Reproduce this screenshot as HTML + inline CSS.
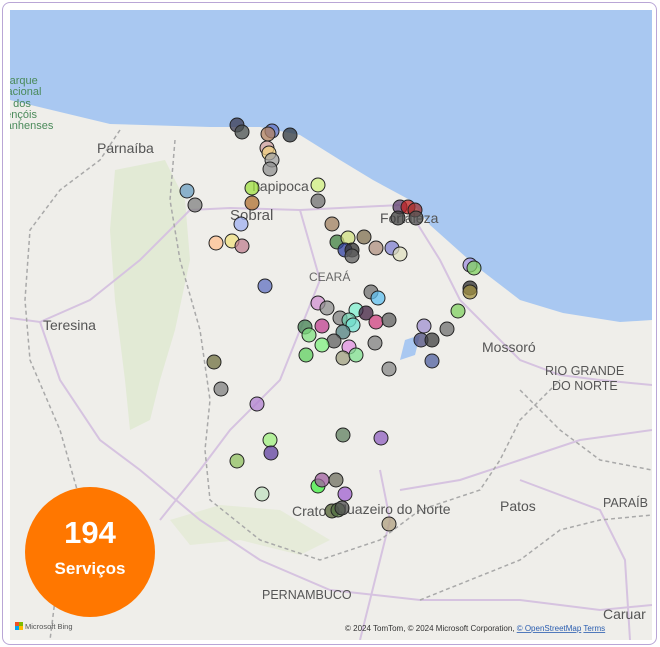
<!DOCTYPE html>
<html><head><meta charset="utf-8"><style>
html,body{margin:0;padding:0;background:#fff;width:660px;height:647px;overflow:hidden}
.frame{position:absolute;left:2px;top:2px;width:655px;height:643px;border:1px solid #b9a6d6;border-radius:8px;box-sizing:border-box}
svg{position:absolute;left:0;top:0}
text{font-family:"Liberation Sans","DejaVu Sans",sans-serif}
</style></head><body>
<div class="frame"></div>
<svg width="660" height="647" viewBox="0 0 660 647">
<defs><clipPath id="c"><rect x="10" y="10" width="642" height="630"/></clipPath></defs>
<g clip-path="url(#c)">
<rect x="10" y="10" width="642" height="630" fill="#efeeea"/>
<path d="M10,10 H652 V320 L620,322 L563,313 L520,300 L477,267 L430,225 L410,200 L373,180 L340,160 L300,135 L260,127 L210,127 L110,124 L60,112 L10,100 Z" fill="#a9c8f1"/>
<path d="M115,170 L165,160 L185,200 L190,260 L175,330 L160,380 L150,420 L130,430 L125,380 L115,300 L110,230 Z" fill="#dfe8cf" opacity="0.8"/>
<path d="M170,520 L220,505 L280,510 L330,540 L300,555 L240,540 L190,545 Z" fill="#e2e9d2" opacity="0.7"/>
<g fill="none" stroke="#d6c3e0" stroke-width="2">
<path d="M10,318 L40,322 L90,300 L140,260 L190,210 L230,208 L300,210 L400,205"/>
<path d="M40,322 L60,380 L100,440 L140,470 L200,520 L260,560 L330,590 L420,600 L520,600 L600,610 L652,605"/>
<path d="M415,220 L440,260 L460,300 L490,330 L520,360 L560,375 L600,380 L652,385"/>
<path d="M300,210 L320,280 L280,380 L230,430 L200,470 L160,520"/>
<path d="M380,470 L390,520 L370,600 L360,640"/>
<path d="M400,490 L460,480 L520,460 L580,440 L652,430"/>
<path d="M520,480 L600,510 L625,560 L630,640"/>
</g>
<g fill="none" stroke="#a9a9a9" stroke-width="1.5" stroke-dasharray="4,3">
<path d="M120,130 L100,160 L60,190 L30,230 L25,300 L30,360 L60,430 L80,500 L60,560 L50,640"/>
<path d="M175,140 L170,200 L180,260 L200,330 L210,400 L205,450 L210,500 L260,540 L320,560 L380,540 L420,510 L480,490 L500,460 L520,420 L540,400 L560,380"/>
<path d="M420,600 L470,580 L520,560 L560,530 L600,520 L652,515"/>
<path d="M520,390 L560,430 L600,460 L652,470"/>
</g>
<path d="M405,340 L420,335 L415,355 L400,360 Z" fill="#a9c8f1"/>
<g fill="#4a8a5a" font-size="11" text-anchor="middle">
<text x="20" y="84">Parque</text><text x="20" y="95">Nacional</text><text x="22" y="107">dos</text><text x="18" y="118">Lençóis</text><text x="20" y="129">Maranhenses</text>
</g>
</g>
<g fill="#555" font-size="14">
<text x="97" y="153">Parnaíba</text>
<text x="252" y="191">Itapipoca</text>
<text x="230" y="220" font-size="15">Sobral</text>
<text x="380" y="223">Fortaleza</text>
<text x="309" y="281" font-size="12" fill="#666">CEARÁ</text>
<text x="43" y="330">Teresina</text>
<text x="482" y="352">Mossoró</text>
<text x="545" y="375" font-size="12.5">RIO GRANDE</text>
<text x="552" y="390" font-size="12.5">DO NORTE</text>
<text x="292" y="516">Crato</text>
<text x="340" y="514">Juazeiro do Norte</text>
<text x="500" y="511">Patos</text>
<text x="603" y="507" font-size="12.5">PARAÍB</text>
<text x="262" y="599" font-size="12.5">PERNAMBUCO</text>
<text x="603" y="619">Caruar</text>
</g>
<g stroke="#222" stroke-width="1" fill-opacity="0.75">
<circle cx="237" cy="125" r="7" fill="#3a3a50"/><circle cx="242" cy="132" r="7" fill="#4a5050"/><circle cx="272" cy="131" r="7" fill="#6070c0"/><circle cx="268" cy="134" r="7" fill="#b08060"/><circle cx="290" cy="135" r="7" fill="#303840"/><circle cx="267" cy="148" r="7" fill="#d0a0a0"/><circle cx="269" cy="153" r="7" fill="#f0d080"/><circle cx="272" cy="160" r="7" fill="#a0a0a0"/><circle cx="270" cy="169" r="7" fill="#909090"/>
<circle cx="187" cy="191" r="7" fill="#6a9ec0"/><circle cx="195" cy="205" r="7" fill="#808080"/><circle cx="252" cy="188" r="7" fill="#a0e040"/><circle cx="318" cy="185" r="7" fill="#d0f080"/><circle cx="252" cy="203" r="7" fill="#b07030"/><circle cx="318" cy="201" r="7" fill="#707070"/><circle cx="241" cy="224" r="7" fill="#a0b0f0"/><circle cx="216" cy="243" r="7" fill="#ffc090"/><circle cx="232" cy="241" r="7" fill="#f0e080"/><circle cx="242" cy="246" r="7" fill="#c08090"/><circle cx="332" cy="224" r="7" fill="#a08060"/><circle cx="265" cy="286" r="7" fill="#6070c0"/>
<circle cx="400" cy="207" r="7" fill="#604070"/><circle cx="408" cy="207" r="7" fill="#c02020"/><circle cx="415" cy="210" r="7" fill="#a03030"/><circle cx="398" cy="218" r="7" fill="#404040"/><circle cx="416" cy="218" r="7" fill="#505050"/>
<circle cx="337" cy="242" r="7" fill="#408040"/><circle cx="348" cy="238" r="7" fill="#d0e080"/><circle cx="364" cy="237" r="7" fill="#807050"/><circle cx="345" cy="250" r="7" fill="#3040a0"/><circle cx="352" cy="250" r="7" fill="#303030"/><circle cx="352" cy="256" r="7" fill="#606060"/><circle cx="376" cy="248" r="7" fill="#b09080"/><circle cx="392" cy="248" r="7" fill="#8080d0"/><circle cx="400" cy="254" r="7" fill="#e0e0c0"/>
<circle cx="470" cy="265" r="7" fill="#a090e0"/><circle cx="474" cy="268" r="7" fill="#80d060"/><circle cx="470" cy="288" r="7" fill="#303030"/><circle cx="470" cy="292" r="7" fill="#a09040"/><circle cx="458" cy="311" r="7" fill="#80d060"/>
<circle cx="318" cy="303" r="7" fill="#d090d0"/><circle cx="327" cy="308" r="7" fill="#909090"/><circle cx="371" cy="292" r="7" fill="#707070"/><circle cx="378" cy="298" r="7" fill="#60c0f0"/><circle cx="356" cy="310" r="7" fill="#80f0d0"/><circle cx="340" cy="318" r="7" fill="#808080"/><circle cx="366" cy="313" r="7" fill="#402040"/><circle cx="305" cy="327" r="7" fill="#408050"/><circle cx="322" cy="326" r="7" fill="#c04090"/><circle cx="349" cy="320" r="7" fill="#70d0b0"/><circle cx="353" cy="325" r="7" fill="#70e0d0"/><circle cx="376" cy="322" r="7" fill="#d04080"/><circle cx="389" cy="320" r="7" fill="#606060"/><circle cx="424" cy="326" r="7" fill="#a090d0"/><circle cx="447" cy="329" r="7" fill="#707070"/><circle cx="343" cy="332" r="7" fill="#508080"/><circle cx="334" cy="341" r="7" fill="#606060"/><circle cx="309" cy="335" r="7" fill="#80e080"/><circle cx="322" cy="345" r="7" fill="#80f080"/><circle cx="349" cy="347" r="7" fill="#e090e0"/><circle cx="343" cy="358" r="7" fill="#a0a080"/><circle cx="356" cy="355" r="7" fill="#80e090"/><circle cx="375" cy="343" r="7" fill="#808080"/><circle cx="421" cy="340" r="7" fill="#505080"/><circle cx="432" cy="340" r="7" fill="#404040"/><circle cx="306" cy="355" r="7" fill="#60d060"/><circle cx="432" cy="361" r="7" fill="#5060a0"/><circle cx="389" cy="369" r="7" fill="#888888"/>
<circle cx="214" cy="362" r="7" fill="#707040"/><circle cx="221" cy="389" r="7" fill="#808080"/><circle cx="257" cy="404" r="7" fill="#b080d0"/><circle cx="343" cy="435" r="7" fill="#608060"/><circle cx="381" cy="438" r="7" fill="#9060c0"/><circle cx="270" cy="440" r="7" fill="#a0f080"/><circle cx="271" cy="453" r="7" fill="#6040a0"/><circle cx="237" cy="461" r="7" fill="#90c060"/><circle cx="262" cy="494" r="7" fill="#c0e0c0"/>
<circle cx="318" cy="486" r="7" fill="#40f040"/><circle cx="322" cy="480" r="7" fill="#a060a0"/><circle cx="336" cy="480" r="7" fill="#707060"/><circle cx="345" cy="494" r="7" fill="#a060d0"/><circle cx="332" cy="511" r="7" fill="#506030"/><circle cx="338" cy="510" r="7" fill="#507040"/><circle cx="342" cy="508" r="7" fill="#505050"/><circle cx="389" cy="524" r="7" fill="#b0a080"/>
</g>
<circle cx="90" cy="552" r="65" fill="#ff7700"/>
<text x="90" y="543" fill="#fff" font-size="31" font-weight="bold" text-anchor="middle" font-family="'DejaVu Sans',sans-serif">194</text>
<text x="90" y="574" fill="#fff" font-size="17" font-weight="bold" text-anchor="middle">Serviços</text>
<rect x="15" y="622" width="4" height="4" fill="#f25022"/><rect x="19" y="622" width="4" height="4" fill="#7fba00"/><rect x="15" y="626" width="4" height="4" fill="#00a4ef"/><rect x="19" y="626" width="4" height="4" fill="#ffb900"/>
<text x="25" y="629" font-size="7.5" fill="#555">Microsoft Bing</text>
<text x="345" y="631" font-size="8" fill="#333">© 2024 TomTom, © 2024 Microsoft Corporation, <tspan fill="#2a5db0" text-decoration="underline">© OpenStreetMap</tspan>  <tspan fill="#2a5db0" text-decoration="underline">Terms</tspan></text>
</svg>
</body></html>
